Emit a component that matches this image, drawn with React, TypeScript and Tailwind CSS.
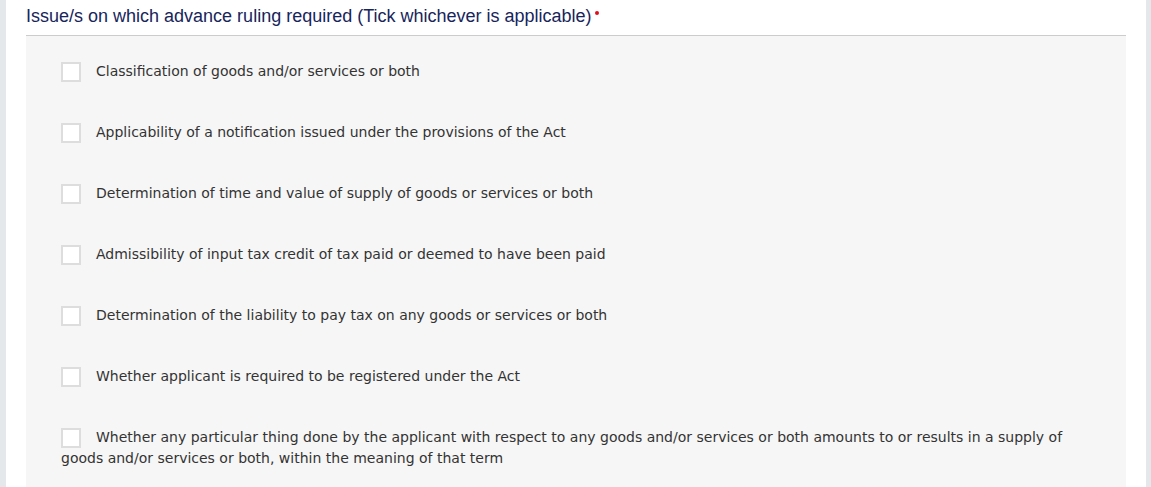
const issues = [
  "Classification of goods and/or services or both",
  "Applicability of a notification issued under the provisions of the Act",
  "Determination of time and value of supply of goods or services or both",
  "Admissibility of input tax credit of tax paid or deemed to have been paid",
  "Determination of the liability to pay tax on any goods or services or both",
  "Whether applicant is required to be registered under the Act",
  "Whether any particular thing done by the applicant with respect to any goods and/or services or both amounts to or results in a supply of goods and/or services or both, within the meaning of that term",
];

function IssueRow({ text }: { text: string }) {
  return (
    <div className="mb-[40px] pr-[40px] text-[14px] leading-[21px] text-[#333333] [font-family:'DejaVu_Sans',sans-serif] last:mb-0">
      <span className="mr-[15px] mt-[1px] inline-block h-[20px] w-[20px] border-2 border-[#dddddd] bg-white align-top" />
      {text}
    </div>
  );
}

export default function App() {
  return (
    <div className="flex min-h-[487px] bg-[#e5e8eb] pl-[6px] pr-[5px]">
      <div className="flex-1 bg-white px-[20px]">
        <div className="border-b border-[#cccccc] pb-[9px] pt-[6px] text-[18px] leading-[20px] text-[#17255b] [font-family:'Liberation_Sans',Arial,sans-serif]">
          Issue/s on which advance ruling required (Tick whichever is
          applicable)
          <span className="ml-[3px] mt-[5px] inline-block h-[4px] w-[4px] rounded-full bg-[#e0101a] align-top" />
        </div>
        <div className="bg-[#f6f6f6] pb-[19px] pl-[35px] pt-[25px]">
          {issues.map((issue) => (
            <IssueRow key={issue} text={issue} />
          ))}
        </div>
      </div>
    </div>
  );
}
